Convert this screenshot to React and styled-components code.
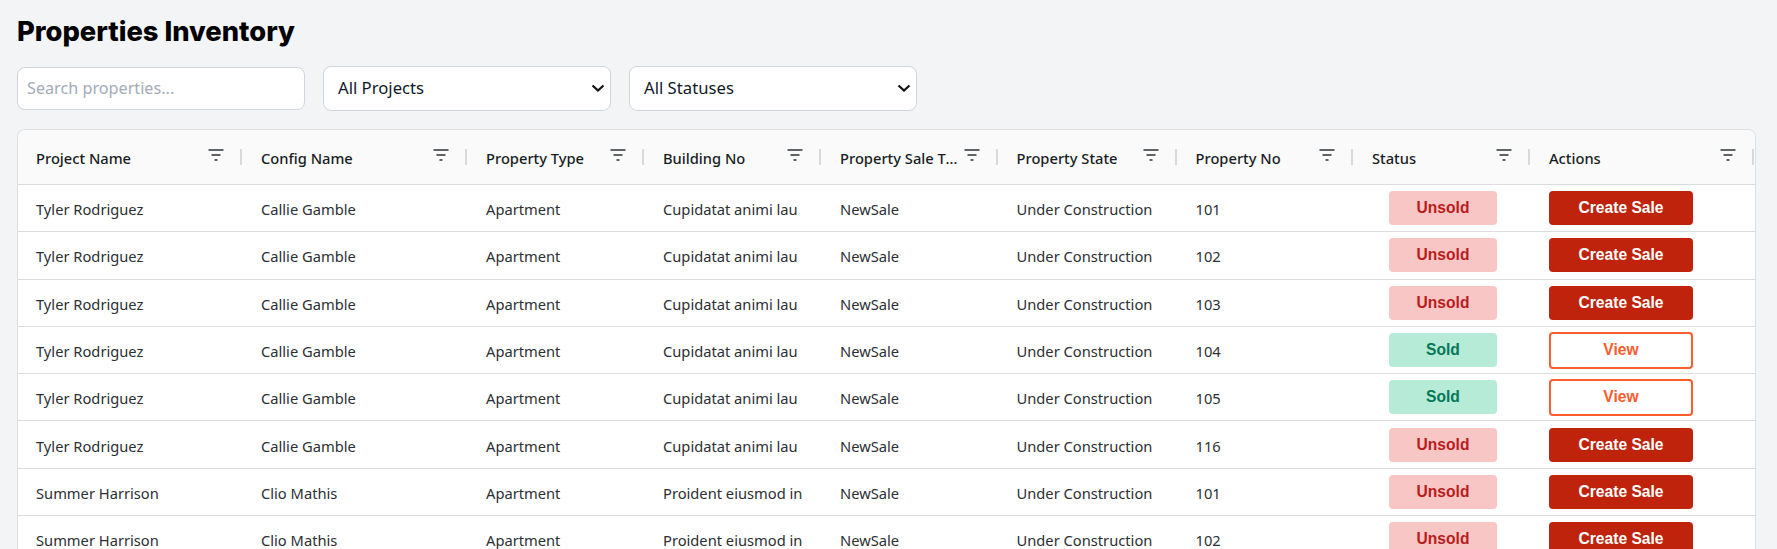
import React from 'react';
import styled, { createGlobalStyle } from 'styled-components';

const GlobalStyle = createGlobalStyle`
  html, body {
    margin: 0;
    height: 100%;
    overflow: hidden;
    background: #f3f4f6;
  }
  * {
    box-sizing: border-box;
  }
`;

const COLUMNS = '225px 225px 177px 177px 176.5px 179px 176.5px 177px 1fr';

const Page = styled.div`
  display: flex;
  flex-direction: column;
  padding: 16px 21px 0 17px;
  font-family: 'Noto Sans', 'Open Sans', sans-serif;
`;

const Title = styled.h1`
  margin: 0 0 18px;
  font-size: 27.3px;
  line-height: 32px;
  font-weight: 800;
  color: #000;
  font-family: 'Inter', sans-serif;
`;

const Filters = styled.div`
  display: flex;
  align-items: center;
  gap: 18px;
  margin-bottom: 18px;
`;

const SearchInput = styled.input`
  width: 288px;
  height: 43px;
  padding: 0 9px 2px;
  border: 1px solid #d1d5db;
  border-radius: 8px;
  background: #fff;
  font-family: inherit;
  font-size: 16.2px;
  outline: none;

  &::placeholder {
    color: #a3abb9;
  }
`;

const SelectBox = styled.div`
  display: flex;
  align-items: center;
  justify-content: space-between;
  width: 288px;
  height: 45px;
  padding: 0 4px 2px 14px;
  border: 1px solid #d1d5db;
  border-radius: 8px;
  background: #fff;
  font-size: 16.7px;
  color: #111827;
`;

const Table = styled.div`
  border: 1px solid #e0e0e0;
  border-bottom: 0;
  border-radius: 8px 8px 0 0;
  background: #fff;
  overflow: hidden;
`;

const HeaderRow = styled.div`
  display: grid;
  grid-template-columns: ${COLUMNS};
  height: 55px;
  background: #fafafa;
  border-bottom: 1px solid #dddddd;
`;

const HeaderCell = styled.div`
  position: relative;
  display: flex;
  align-items: center;
  justify-content: space-between;
  padding: 1px 19px 0 18px;
  min-width: 0;
  font-size: 14.7px;
  font-weight: 500;
  color: #181d1f;

  &::after {
    content: '';
    position: absolute;
    top: 19px;
    right: 1px;
    width: 2px;
    height: 16px;
    background: #d9d9d9;
  }
`;

const HeaderLabel = styled.span`
  overflow: hidden;
  white-space: nowrap;
  text-overflow: ellipsis;
`;

const FilterIcon = styled.svg`
  flex: none;
  width: 16px;
  height: 12px;
  margin-top: -5px;
`;

const Row = styled.div`
  display: grid;
  grid-template-columns: ${COLUMNS};
  height: 47.3px;
  border-bottom: 1px solid #dddddd;
  font-size: 14.7px;
  color: #2b3033;
`;

const Cell = styled.div`
  display: flex;
  align-items: center;
  padding: 2px 0 0 18px;
  min-width: 0;
  white-space: nowrap;
`;

const StatusCell = styled.div`
  display: flex;
  align-items: center;
  justify-content: center;
  padding-left: 1px;
`;

const ActionCell = styled.div`
  display: flex;
  align-items: center;
  padding-left: 18px;
`;

const Pill = styled.div`
  display: flex;
  align-items: center;
  justify-content: center;
  width: 108px;
  height: 34px;
  border-radius: 4px;
  font-family: 'Liberation Sans', sans-serif;
  font-size: 15.6px;
  font-weight: 700;
  background: ${(props) => (props.sold ? '#b6ebd7' : '#f9c6c6')};
  color: ${(props) => (props.sold ? '#047857' : '#b91c1c')};
`;

const ActionButton = styled.button`
  width: 144px;
  height: ${(props) => (props.outlined ? '37px' : '34px')};
  padding: 0;
  border-radius: 4px;
  border: ${(props) => (props.outlined ? '2px solid #ff5c2e' : '0')};
  background: ${(props) => (props.outlined ? '#fff' : '#c0230c')};
  color: ${(props) => (props.outlined ? '#ff5c2e' : '#fff')};
  font-family: 'Liberation Sans', sans-serif;
  font-size: 15.6px;
  font-weight: 700;
`;

const HEADERS = [
  'Project Name',
  'Config Name',
  'Property Type',
  'Building No',
  'Property Sale Type',
  'Property State',
  'Property No',
  'Status',
  'Actions',
];

const tyler = { project: 'Tyler Rodriguez', config: 'Callie Gamble', building: 'Cupidatat animi lau' };
const summer = { project: 'Summer Harrison', config: 'Clio Mathis', building: 'Proident eiusmod in' };

const ROWS = [
  { ...tyler, no: 101, sold: false },
  { ...tyler, no: 102, sold: false },
  { ...tyler, no: 103, sold: false },
  { ...tyler, no: 104, sold: true },
  { ...tyler, no: 105, sold: true },
  { ...tyler, no: 116, sold: false },
  { ...summer, no: 101, sold: false },
  { ...summer, no: 102, sold: false },
];

const Filter = () => (
  <FilterIcon viewBox="0 0 16 12" fill="none" stroke="#2f3437" strokeWidth="1.5">
    <path d="M0.5 1h15M3.5 6h9M6.5 11h3" />
  </FilterIcon>
);

const Chevron = () => (
  <svg width="16" height="16" viewBox="0 0 16 16" fill="none" stroke="#111" strokeWidth="2.2">
    <path d="M2.5 5.5l5.5 5 5.5-5" />
  </svg>
);

const App = () => (
  <Page>
    <GlobalStyle />
    <Title>Properties Inventory</Title>
    <Filters>
      <SearchInput placeholder="Search properties..." />
      <SelectBox>
        All Projects
        <Chevron />
      </SelectBox>
      <SelectBox>
        All Statuses
        <Chevron />
      </SelectBox>
    </Filters>
    <Table>
      <HeaderRow>
        {HEADERS.map((header) => (
          <HeaderCell key={header}>
            <HeaderLabel>{header}</HeaderLabel>
            <Filter />
          </HeaderCell>
        ))}
      </HeaderRow>
      {ROWS.map((row, index) => (
        <Row key={index}>
          <Cell>{row.project}</Cell>
          <Cell>{row.config}</Cell>
          <Cell>Apartment</Cell>
          <Cell>{row.building}</Cell>
          <Cell>NewSale</Cell>
          <Cell>Under Construction</Cell>
          <Cell>{row.no}</Cell>
          <StatusCell>
            <Pill sold={row.sold}>{row.sold ? 'Sold' : 'Unsold'}</Pill>
          </StatusCell>
          <ActionCell>
            <ActionButton outlined={row.sold}>{row.sold ? 'View' : 'Create Sale'}</ActionButton>
          </ActionCell>
        </Row>
      ))}
    </Table>
  </Page>
);

export default App;
